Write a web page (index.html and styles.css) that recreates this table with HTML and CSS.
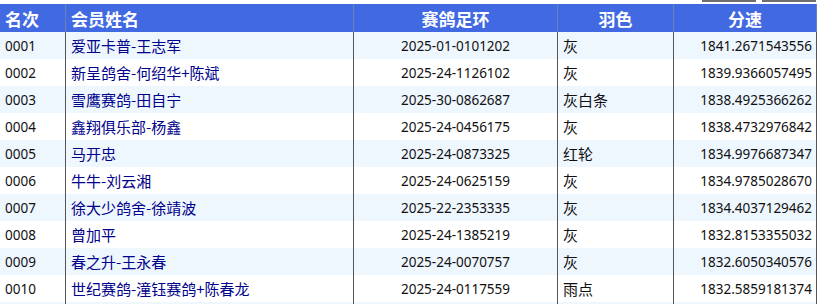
FILE: index.html
```html
<!DOCTYPE html>
<html lang="zh-CN">
<head>
<meta charset="utf-8">
<title>排名</title>
<link rel="stylesheet" href="styles.css">
</head>
<body>
<div class="topbar"><span class="tab"></span><span class="tab"></span></div>
<div class="table">
  <div class="row head">
    <div class="c c1">名次</div><div class="c c2">会员姓名</div><div class="c c3">赛鸽足环</div><div class="c c4">羽色</div><div class="c c5">分速</div>
  </div>
  <div class="row odd"><div class="c c1 num">0001</div><div class="c c2 name">爱亚卡普-王志军</div><div class="c c3 num">2025-01-0101202</div><div class="c c4 col">灰</div><div class="c c5 num">1841.2671543556</div></div>
  <div class="row"><div class="c c1 num">0002</div><div class="c c2 name">新呈鸽舍-何绍华+陈斌</div><div class="c c3 num">2025-24-1126102</div><div class="c c4 col">灰</div><div class="c c5 num">1839.9366057495</div></div>
  <div class="row odd"><div class="c c1 num">0003</div><div class="c c2 name">雪鹰赛鸽-田自宁</div><div class="c c3 num">2025-30-0862687</div><div class="c c4 col">灰白条</div><div class="c c5 num">1838.4925366262</div></div>
  <div class="row"><div class="c c1 num">0004</div><div class="c c2 name">鑫翔俱乐部-杨鑫</div><div class="c c3 num">2025-24-0456175</div><div class="c c4 col">灰</div><div class="c c5 num">1838.4732976842</div></div>
  <div class="row odd"><div class="c c1 num">0005</div><div class="c c2 name">马开忠</div><div class="c c3 num">2025-24-0873325</div><div class="c c4 col">红轮</div><div class="c c5 num">1834.9976687347</div></div>
  <div class="row"><div class="c c1 num">0006</div><div class="c c2 name">牛牛-刘云湘</div><div class="c c3 num">2025-24-0625159</div><div class="c c4 col">灰</div><div class="c c5 num">1834.9785028670</div></div>
  <div class="row odd"><div class="c c1 num">0007</div><div class="c c2 name">徐大少鸽舍-徐靖波</div><div class="c c3 num">2025-22-2353335</div><div class="c c4 col">灰</div><div class="c c5 num">1834.4037129462</div></div>
  <div class="row"><div class="c c1 num">0008</div><div class="c c2 name">曾加平</div><div class="c c3 num">2025-24-1385219</div><div class="c c4 col">灰</div><div class="c c5 num">1832.8153355032</div></div>
  <div class="row odd"><div class="c c1 num">0009</div><div class="c c2 name">春之升-王永春</div><div class="c c3 num">2025-24-0070757</div><div class="c c4 col">灰</div><div class="c c5 num">1832.6050340576</div></div>
  <div class="row"><div class="c c1 num">0010</div><div class="c c2 name">世纪赛鸽-潼钰赛鸽+陈春龙</div><div class="c c3 num">2025-24-0117559</div><div class="c c4 col">雨点</div><div class="c c5 num">1832.5859181374</div></div>
  <div class="row odd tail"><div class="c c1"></div><div class="c c2"></div><div class="c c3"></div><div class="c c4"></div><div class="c c5"></div></div>
</div>
</body>
</html>
```
FILE: styles.css
```css
html, body {
  margin: 0;
  padding: 0;
  background: #ffffff;
  overflow: hidden;
}
body {
  font-family: "Noto Sans", "Noto Sans CJK SC", sans-serif;
}
.topbar {
  height: 4px;
  width: 817px;
  display: flex;
  justify-content: flex-end;
  gap: 6px;
  padding-right: 1px;
  box-sizing: border-box;
}
.tab {
  width: 54px;
  height: 2px;
  background: #6e6e6e;
}
.table {
  width: 817px;
}
.row {
  display: grid;
  grid-template-columns: 66px 288px 204px 116px 143px;
  height: 27px;
  background: #ffffff;
}
.row.odd {
  background: #eef6fe;
}
.row.tail {
  height: 2px;
}
.row.head {
  height: 28px;
  background: #4169e1;
  color: #ffffff;
  font-family: "Noto Sans CJK SC", sans-serif;
  font-weight: bold;
  font-size: 17px;
}
.c {
  border-right: 1px solid #555555;
  box-sizing: border-box;
  display: flex;
  align-items: center;
  white-space: nowrap;
  overflow: hidden;
}
.head .c {
  border-right-color: #6b7fb8;
}
.head .c1 { padding-left: 5px; }
.head .c2 { padding-left: 5px; }
.head .c3, .head .c4, .head .c5 { justify-content: center; }
.num {
  font-family: "Noto Sans", sans-serif;
  font-size: 13.5px;
  color: #111111;
}
.c1.num { padding-left: 5px; }
.c3.num { justify-content: center; }
.c5.num { justify-content: flex-end; padding-right: 4px; }
.name {
  font-family: "Noto Sans CJK SC", sans-serif;
  font-size: 15px;
  color: #00008b;
  padding-left: 5px;
}
.col {
  font-family: "Noto Sans CJK SC", sans-serif;
  font-size: 15px;
  color: #111111;
  padding-left: 5px;
}
```
